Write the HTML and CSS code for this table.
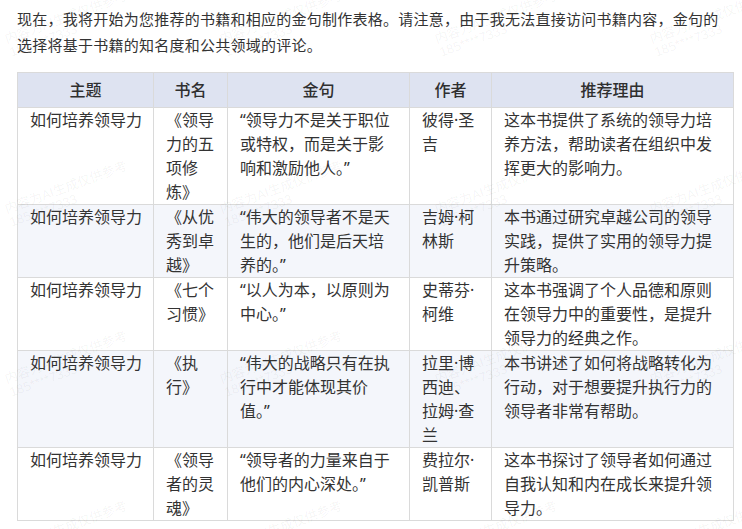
FILE: index.html
```html
<!DOCTYPE html>
<html lang="zh-CN">
<head>
<meta charset="utf-8">
<title>领导力书籍推荐</title>
<link rel="stylesheet" href="styles.css">
</head>
<body>
<main class="page">
  <p class="intro">现在，我将开始为您推荐的书籍和相应的金句制作表格。请注意，由于我无法直接访问书籍内容，金句的选择将基于书籍的知名度和公共领域的评论。</p>
  <table class="books">
    <colgroup>
      <col class="c-topic">
      <col class="c-title">
      <col class="c-quote">
      <col class="c-author">
      <col class="c-reason">
    </colgroup>
    <thead>
      <tr><th>主题</th><th>书名</th><th>金句</th><th>作者</th><th>推荐理由</th></tr>
    </thead>
    <tbody>
      <tr>
        <td class="topic">如何培养领导力</td>
        <td>《领导力的五项修炼》</td>
        <td>“领导力不是关于职位或特权，而是关于影响和激励他人。”</td>
        <td>彼得·圣吉</td>
        <td>这本书提供了系统的领导力培养方法，帮助读者在组织中发挥更大的影响力。</td>
      </tr>
      <tr>
        <td class="topic">如何培养领导力</td>
        <td>《从优秀到卓越》</td>
        <td>“伟大的领导者不是天生的，他们是后天培养的。”</td>
        <td>吉姆·柯林斯</td>
        <td>本书通过研究卓越公司的领导实践，提供了实用的领导力提升策略。</td>
      </tr>
      <tr>
        <td class="topic">如何培养领导力</td>
        <td>《七个习惯》</td>
        <td>“以人为本，以原则为中心。”</td>
        <td>史蒂芬·柯维</td>
        <td>这本书强调了个人品德和原则在领导力中的重要性，是提升领导力的经典之作。</td>
      </tr>
      <tr>
        <td class="topic">如何培养领导力</td>
        <td>《执行》</td>
        <td>“伟大的战略只有在执行中才能体现其价值。”</td>
        <td>拉里·博西迪、拉姆·查兰</td>
        <td>本书讲述了如何将战略转化为行动，对于想要提升执行力的领导者非常有帮助。</td>
      </tr>
      <tr>
        <td class="topic">如何培养领导力</td>
        <td>《领导者的灵魂》</td>
        <td>“领导者的力量来自于他们的内心深处。”</td>
        <td>费拉尔·凯普斯</td>
        <td>这本书探讨了领导者如何通过自我认知和内在成长来提升领导力。</td>
      </tr>
    </tbody>
  </table>
</main>
<div class="watermarks" aria-hidden="true">
  <span class="wm">内容为AI生成仅供参考<br>185****7333</span>
  <span class="wm">内容为AI生成仅供参考<br>185****7333</span>
  <span class="wm">内容为AI生成仅供参考<br>185****7333</span>
  <span class="wm">内容为AI生成仅供参考<br>185****7333</span>
  <span class="wm">内容为AI生成仅供参考<br>185****7333</span>
  <span class="wm">内容为AI生成仅供参考<br>185****7333</span>
  <span class="wm">内容为AI生成仅供参考<br>185****7333</span>
  <span class="wm">内容为AI生成仅供参考<br>185****7333</span>
  <span class="wm">内容为AI生成仅供参考<br>185****7333</span>
  <span class="wm">内容为AI生成仅供参考<br>185****7333</span>
  <span class="wm">内容为AI生成仅供参考<br>185****7333</span>
  <span class="wm">内容为AI生成仅供参考<br>185****7333</span>
  <span class="wm">内容为AI生成仅供参考<br>185****7333</span>
  <span class="wm">内容为AI生成仅供参考<br>185****7333</span>
  <span class="wm">内容为AI生成仅供参考<br>185****7333</span>
  <span class="wm">内容为AI生成仅供参考<br>185****7333</span>
</div>
</body>
</html>
```
FILE: styles.css
```css
html, body {
  margin: 0;
  background: #ffffff;
}

body {
  position: relative;
  width: 742px;
  height: 529px;
  overflow: hidden;
  font-family: "Noto Sans", "Noto Sans CJK SC", sans-serif;
  color: #333333;
}

.page {
  padding: 6px 9px 0 17px;
}

.intro {
  margin: 0 0 14px;
  width: 712px;
  font-size: 15px;
  line-height: 26px;
  letter-spacing: 0.25px;
  color: #333333;
}

.books {
  width: 716px;
  border-collapse: collapse;
  table-layout: fixed;
  font-size: 16px;
  line-height: 24px;
}

.c-topic { width: 136px; }
.c-title { width: 74px; }
.c-quote { width: 182px; }
.c-author { width: 82px; }
.c-reason { width: 242px; }

.books th,
.books td {
  border: 1px solid #dadada;
  padding: 0 12px;
  vertical-align: top;
  text-align: left;
}

.books th {
  background: #dee3f1;
  text-align: center;
  font-weight: 500;
  padding: 5px 12px 5px;
  color: #2f2f2f;
}

.books tbody tr:nth-child(even) td {
  background: #f4f6fb;
}

.books td.topic {
  white-space: nowrap;
}

.watermarks {
  position: absolute;
  inset: 0;
  display: grid;
  grid-template-columns: repeat(4, 215px);
  grid-template-rows: repeat(4, 170px);
  margin: -60px 0 0 0;
  pointer-events: none;
}

.wm {
  align-self: center;
  justify-self: start;
  transform: rotate(-20deg);
  font-family: "Liberation Sans", "Noto Sans CJK SC", sans-serif;
  font-size: 13px;
  line-height: 14px;
  color: rgba(0, 0, 0, 0.05);
  white-space: nowrap;
  padding-left: 4px;
}
```
